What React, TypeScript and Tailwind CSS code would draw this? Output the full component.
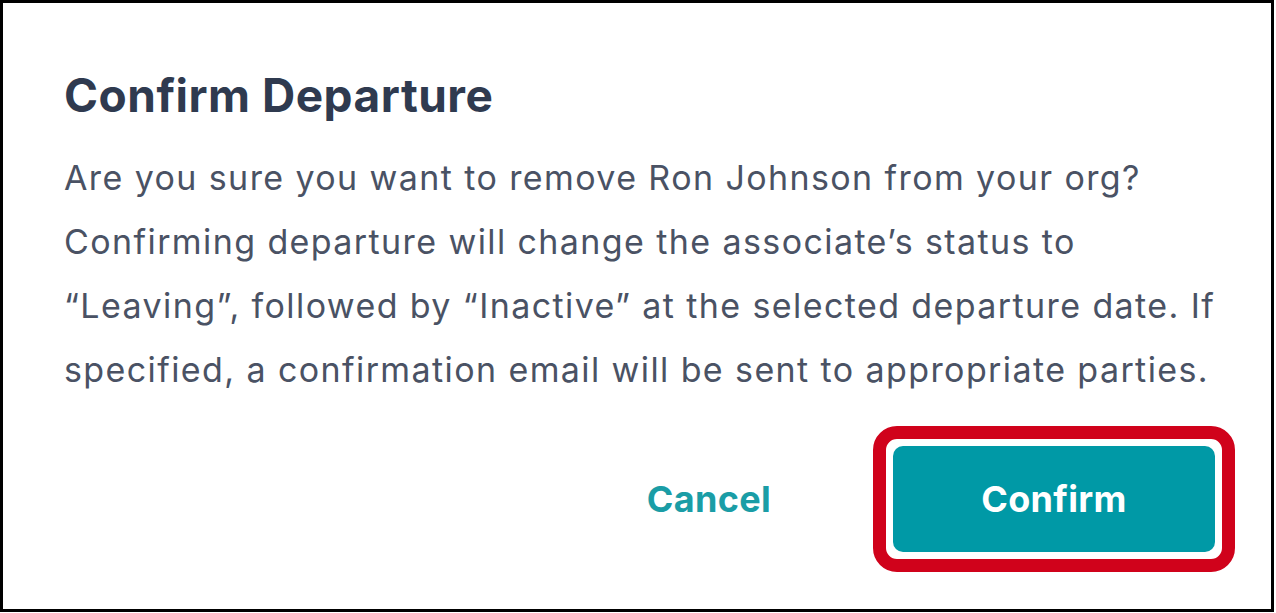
import React from "react";

export default function App() {
  return (
    <div className="w-[1276px] h-[613px] bg-white" style={{ fontFamily: "Inter, 'Noto Sans', sans-serif" }}>
      <div className="w-[1274px] h-[612px] border-[3px] border-black flex flex-col bg-white">
        <div className="pl-[61px] pt-[64px]">
          <h1 className="text-[46px] leading-[56px] font-bold tracking-[0.5px] text-[#2f3a4f] whitespace-nowrap">
            Confirm Departure
          </h1>
          <div className="mt-[23px] text-[34px] leading-[64px] tracking-[1.4px] text-[#4a5264] whitespace-nowrap">
            <p>Are you sure you want to remove Ron Johnson from your org?</p>
            <p>Confirming departure will change the associate’s status to</p>
            <p>“Leaving”, followed by “Inactive” at the selected departure date. If</p>
            <p>specified, a confirmation email will be sent to appropriate parties.</p>
          </div>
        </div>
        <div className="flex-1 flex items-end justify-end pr-[36px] pb-[37px]">
          <div className="h-[146px] flex items-center mr-[102px]">
            <button className="text-[36px] leading-[44px] font-bold tracking-[0.3px] text-[#1a9da6]">Cancel</button>
          </div>
          <div className="rounded-[24px] border-[13px] border-[#d0021b] p-[7px] bg-white">
            <button className="w-[322px] h-[106px] rounded-[10px] bg-[#0099a6] text-white text-[36px] font-bold tracking-[0.3px] flex items-center justify-center">
              Confirm
            </button>
          </div>
        </div>
      </div>
    </div>
  );
}
